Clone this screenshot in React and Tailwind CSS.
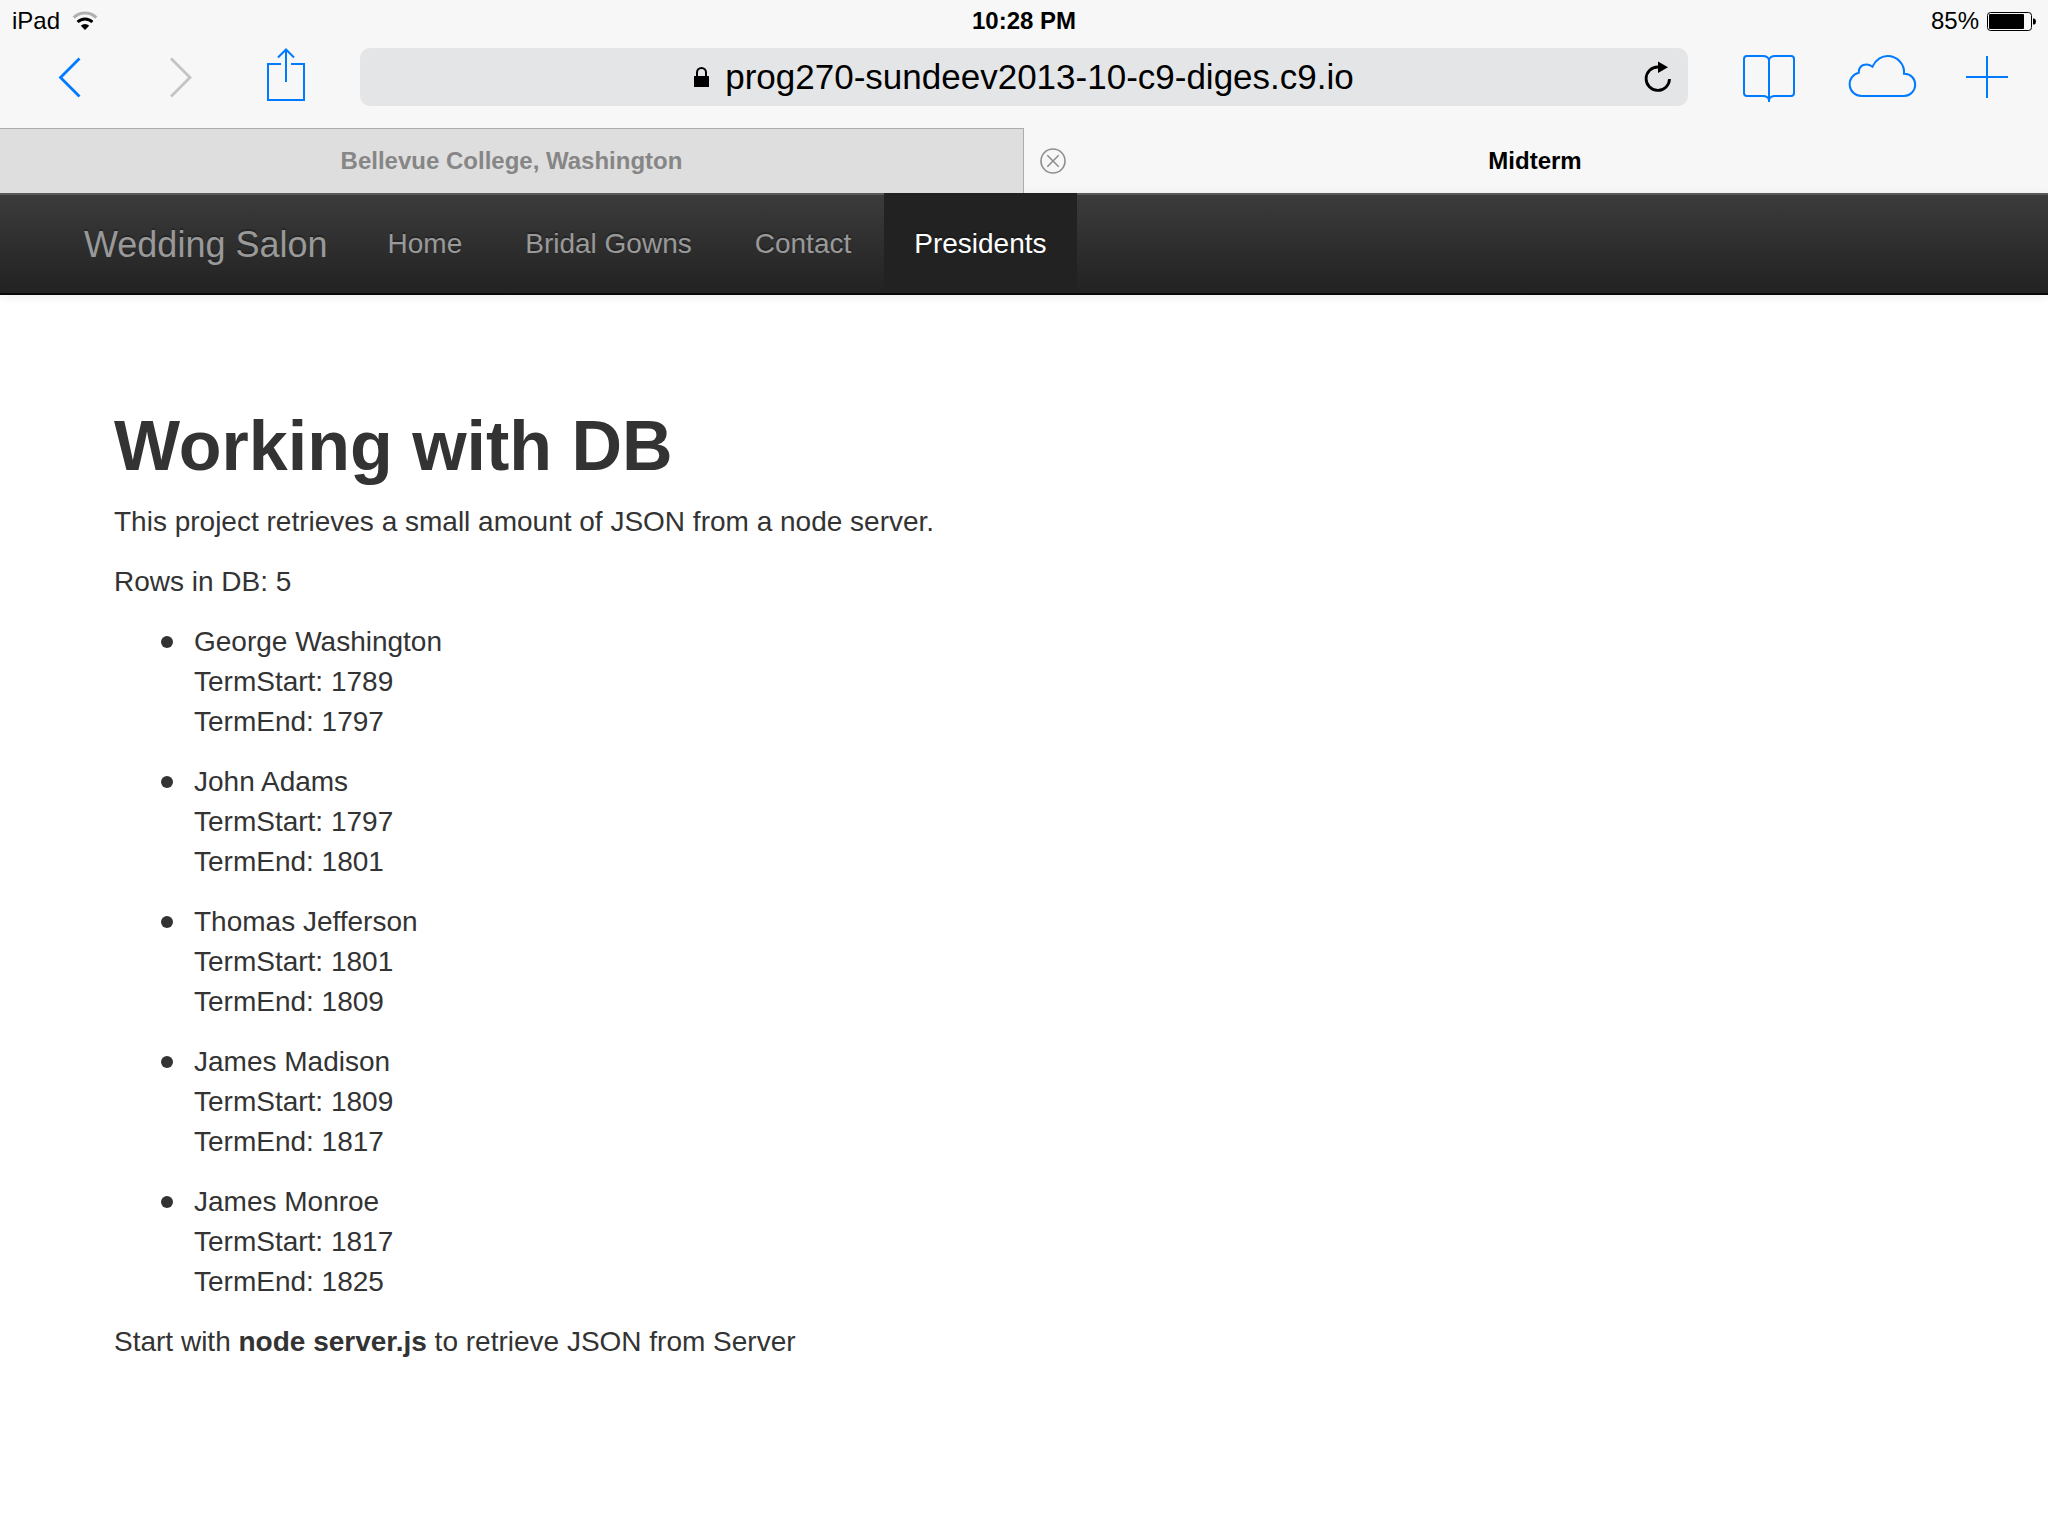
import React from "react";

const presidents = [
  { name: "George Washington", start: 1789, end: 1797 },
  { name: "John Adams", start: 1797, end: 1801 },
  { name: "Thomas Jefferson", start: 1801, end: 1809 },
  { name: "James Madison", start: 1809, end: 1817 },
  { name: "James Monroe", start: 1817, end: 1825 },
];

const navLinks = [
  { label: "Home" },
  { label: "Bridal Gowns" },
  { label: "Contact" },
  { label: "Presidents", active: true },
];

function WifiIcon() {
  return (
    <svg width="26" height="20" viewBox="0 0 26 20" fill="none" aria-hidden="true">
      <path d="M1.7 6.6A16 16 0 0 1 24.3 6.6" stroke="#b0b0b0" strokeWidth="3" />
      <path d="M5.6 11A10.4 10.4 0 0 1 20.4 11" stroke="#000" strokeWidth="3" />
      <path d="M13 19 8.8 14.8A6 6 0 0 1 17.2 14.8Z" fill="#000" />
    </svg>
  );
}

function BatteryIcon() {
  return (
    <svg width="49" height="19" viewBox="0 0 49 19" fill="none" aria-hidden="true">
      <rect x="0.5" y="0.5" width="44" height="18" rx="3" stroke="#000" />
      <rect x="2" y="2" width="35" height="15" rx="1" fill="#000" />
      <path d="M46 6.5h1q2 0.5 2 3t-2 3h-1Z" fill="#000" />
    </svg>
  );
}

function BackIcon() {
  return (
    <svg width="40" height="58" viewBox="0 0 40 58" fill="none" stroke="currentColor" strokeWidth="2.8" aria-hidden="true">
      <path d="M29.5 10.5 10.5 29.5 29.5 48.5" />
    </svg>
  );
}

function ForwardIcon() {
  return (
    <svg width="40" height="58" viewBox="0 0 40 58" fill="none" stroke="currentColor" strokeWidth="2.8" aria-hidden="true">
      <path d="M10 10.5 29 29.5 10 48.5" />
    </svg>
  );
}

function ShareIcon() {
  return (
    <svg width="40" height="58" viewBox="0 0 40 58" fill="none" stroke="currentColor" strokeWidth="2" aria-hidden="true">
      <path d="M15 16H2V52H38V16H25" />
      <path d="M20 34V2M12 9.5 20 1.5 28 9.5" />
    </svg>
  );
}

function BookIcon() {
  return (
    <svg width="54" height="58" viewBox="0 0 54 58" fill="none" stroke="currentColor" strokeWidth="2" aria-hidden="true">
      <path d="M27 54V12Q26 8 21 8H5Q2 8 2 11V45Q2 48 5 48H21Q26 48 27 52Q28 48 33 48H49Q52 48 52 45V11Q52 8 49 8H33Q28 8 27 12" />
    </svg>
  );
}

function CloudIcon() {
  return (
    <svg width="70" height="58" viewBox="0 0 70 58" fill="none" stroke="currentColor" strokeWidth="2" aria-hidden="true">
      <path d="M13.5 48A11.8 11.8 0 0 1 10.8 24.7C10.6 16.500 18.5 14.500 24.5 18.7C28 11 34.500 8 39.5 8C49 8 57 16 56 25.8C63 25.5 67.2 31 67.2 36.8C67.2 43 62 48 56 48Z" />
    </svg>
  );
}

function PlusIcon() {
  return (
    <svg width="44" height="58" viewBox="0 0 44 58" fill="none" stroke="currentColor" strokeWidth="2" aria-hidden="true">
      <path d="M22 8V50M1 29H43" />
    </svg>
  );
}

function LockIcon() {
  return (
    <svg width="15" height="20" viewBox="0 0 15 20" fill="none" aria-hidden="true">
      <path d="M3 10V5.5A4.5 4.5 0 0 1 12 5.5V10" stroke="#000" strokeWidth="2" />
      <rect y="9" width="15" height="11" rx="0.5" fill="#000" />
    </svg>
  );
}

function ReloadIcon() {
  return (
    <svg width="28" height="32" viewBox="0 0 28 32" fill="none" aria-hidden="true">
      <path d="M25.5 18A11.7 11.7 0 1 1 14 6" stroke="#000" strokeWidth="2.8" />
      <path d="M14 0.5 24 6.3 14 12Z" fill="#000" />
    </svg>
  );
}

function CloseIcon() {
  return (
    <svg width="26" height="26" viewBox="0 0 26 26" fill="none" stroke="#8e8e8e" strokeWidth="1.6" aria-hidden="true">
      <circle cx="13" cy="13" r="12" />
      <path d="M7.3 7.3 18.7 18.7M18.7 7.3 7.3 18.7" />
    </svg>
  );
}

function StatusBar() {
  return (
    <div className="grid h-10 grid-cols-3 items-center px-3 pt-0.5 text-2xl leading-9">
      <div className="flex items-center gap-3">
        <span>iPad</span>
        <WifiIcon />
      </div>
      <div className="text-center font-bold">10:28 PM</div>
      <div className="flex items-center justify-end gap-2">
        <span>85%</span>
        <BatteryIcon />
      </div>
    </div>
  );
}

function Toolbar() {
  return (
    <div className="flex items-center pt-2 pr-[39px] pb-[22px] pl-[50px] text-[#007aff]">
      <button type="button" aria-label="Back">
        <BackIcon />
      </button>
      <button type="button" aria-label="Forward" className="ml-[71px] text-[#c4c4c4]">
        <ForwardIcon />
      </button>
      <button type="button" aria-label="Share" className="ml-[65px]">
        <ShareIcon />
      </button>
      <div className="mr-[54px] ml-[54px] grid h-[58px] flex-1 grid-cols-[1fr_auto_1fr] items-center rounded-[10px] bg-[#e4e5e7] px-4 text-black">
        <span />
        <div className="flex items-center gap-4">
          <LockIcon />
          <input
            type="text"
            aria-label="Address"
            defaultValue="prog270-sundeev2013-10-c9-diges.c9.io"
            className="field-sizing-content h-14 bg-transparent text-[35px] leading-[56px] outline-none"
          />
        </div>
        <button type="button" aria-label="Reload" className="justify-self-end">
          <ReloadIcon />
        </button>
      </div>
      <button type="button" aria-label="Bookmarks">
        <BookIcon />
      </button>
      <button type="button" aria-label="iCloud tabs" className="ml-[52px]">
        <CloudIcon />
      </button>
      <button type="button" aria-label="New tab" className="ml-[47px]">
        <PlusIcon />
      </button>
    </div>
  );
}

function TabBar() {
  return (
    <div className="grid h-[65px] grid-cols-2 text-2xl font-bold">
      <button type="button" className="border-t border-r border-[#acacac] bg-[#dedede] text-[#868686]">
        Bellevue College, Washington
      </button>
      <div className="flex items-center px-4">
        <button type="button" aria-label="Close tab">
          <CloseIcon />
        </button>
        <button type="button" className="h-full flex-1 pr-7">
          Midterm
        </button>
      </div>
    </div>
  );
}

function NavBar() {
  return (
    <nav className="flex h-[102px] border-b-2 border-[#080808] bg-linear-to-b from-[#3c3c3c] to-[#222222] pl-[54px] text-[#999999] shadow-[inset_0_2px_0_rgba(255,255,255,0.15),0_2px_10px_rgba(0,0,0,0.075)] text-shadow-[0_-2px_0_rgba(0,0,0,0.25)]">
      <a href="#" className="px-[30px] pt-1 text-4xl leading-[96px]">
        Wedding Salon
      </a>
      <ul className="flex gap-[3px] text-[28px] leading-[98px]">
        {navLinks.map((link) => (
          <li key={link.label}>
            <a
              href="#"
              className={
                link.active
                  ? "block bg-[#222222] px-[30px] pt-0.5 text-white"
                  : "block px-[30px] pt-0.5"
              }
            >
              {link.label}
            </a>
          </li>
        ))}
      </ul>
    </nav>
  );
}

function Content() {
  return (
    <main className="px-[114px] pt-[107px] text-[28px] leading-10 text-[#333333]">
      <h1 className="mb-3 text-[70px] leading-[88px] font-bold">Working with DB</h1>
      <p className="mb-5">This project retrieves a small amount of JSON from a node server.</p>
      <p className="mb-5">Rows in DB: 5</p>
      <ul className="pl-[47px]">
        {presidents.map((p) => (
          <li key={p.name} className="mb-5 flex gap-[21px]">
            <span className="mt-3.5 size-3 rounded-full bg-[#333333]" />
            <div>
              <p>{p.name}</p>
              <p>TermStart: {p.start}</p>
              <p>TermEnd: {p.end}</p>
            </div>
          </li>
        ))}
      </ul>
      <p>
        Start with <strong>node server.js</strong> to retrieve JSON from Server
      </p>
    </main>
  );
}

export default function App() {
  return (
    <div className="min-h-screen bg-white font-['Liberation_Sans',Arial,sans-serif]">
      <header className="bg-[#f7f7f7] text-black">
        <StatusBar />
        <Toolbar />
        <TabBar />
      </header>
      <NavBar />
      <Content />
    </div>
  );
}
